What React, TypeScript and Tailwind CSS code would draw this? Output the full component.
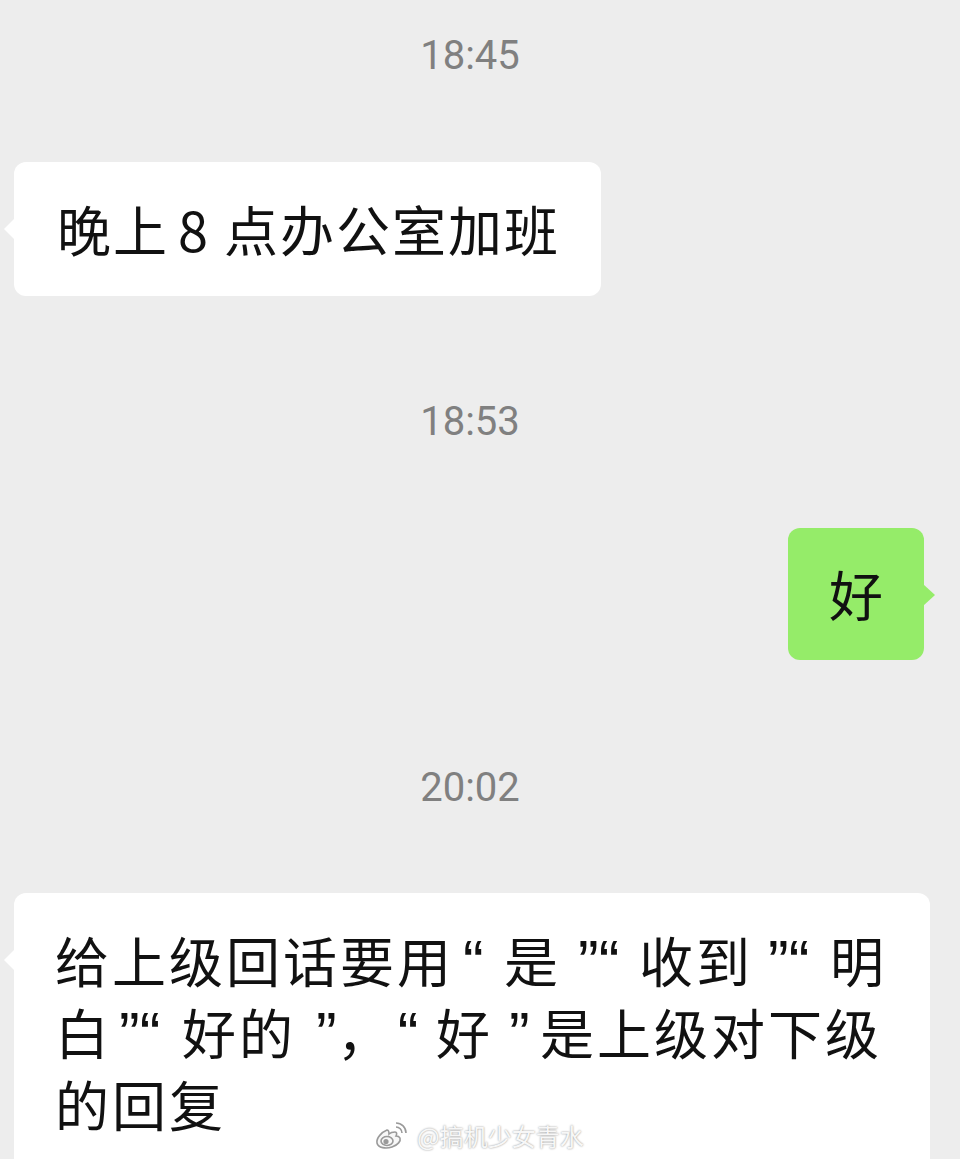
import React from "react";

const font = { fontFamily: '"Noto Sans CJK SC", "Noto Sans", sans-serif' };

function Time({ t }: { t: string }) {
  return (
    <div className="h-[50px] pr-[20px] flex items-center justify-center text-[40px] text-[#808080] font-['Roboto','Noto_Sans',sans-serif]">
      {t}
    </div>
  );
}

/* a quotation mark in a Latin font, drawn larger like the reference */
function M({ children }: { children: React.ReactNode }) {
  return (
    <span className="text-[62px] leading-[0] tracking-[0px] font-['Liberation_Sans',Arial,sans-serif]">
      {children}
    </span>
  );
}

export default function App() {
  return (
    <div
      className="w-[960px] h-[1159px] overflow-hidden bg-[#ededed] flex flex-col relative"
      style={font}
    >
      <div className="mt-[31px]">
        <Time t="18:45" />
      </div>

      {/* bubble 1 */}
      <div className="mt-[81px] ml-[14px] self-start relative">
        <div className="absolute left-[-10px] top-[56px] w-0 h-0 border-y-[11px] border-y-transparent border-r-[11px] border-r-white" />
        <div className="bg-white rounded-[12px] pl-[43px] pr-[41px] py-[31px] text-[54px] leading-[72px] tracking-[2px] text-[#111] whitespace-nowrap">
          晚上<span className="ml-[9px]">8</span>
          <span className="ml-[14px]">点办公室加班</span>
        </div>
      </div>

      <div className="mt-[101px]">
        <Time t="18:53" />
      </div>

      {/* green bubble */}
      <div className="mt-[81px] mr-[36px] self-end relative">
        <div className="absolute right-[-11px] top-[56px] w-0 h-0 border-y-[11px] border-y-transparent border-l-[12px] border-l-[#95ec69]" />
        <div className="bg-[#95ec69] rounded-[12px] px-[41px] py-[30px] text-[54px] leading-[72px] text-[#111]">
          好
        </div>
      </div>

      <div className="mt-[103px]">
        <Time t="20:02" />
      </div>

      {/* bubble 3 */}
      <div className="mt-[80px] ml-[14px] w-[916px] relative">
        <div className="absolute left-[-10px] top-[56px] w-0 h-0 border-y-[11px] border-y-transparent border-r-[11px] border-r-white" />
        <div className="bg-white rounded-[12px] pl-[41px] pr-[20px] pt-[31px] pb-[40px] text-[54px] leading-[72px] tracking-[3px] text-[#111] whitespace-nowrap">
          <div>
            给上级回话要用
            <span className="inline-block w-[50px] pl-[9px]"><M>“</M></span>
            是
            <span className="inline-block w-[78px] pl-[17px]"><M>”“</M></span>
            收到
            <span className="inline-block w-[77px] pl-[15px]"><M>”“</M></span>
            明
          </div>
          <div>
            白
            <span className="inline-block w-[70px] pl-[7px]"><M>”“</M></span>
            好的
            <span className="inline-block w-[140px] pl-[20px]">
              <M>”</M>
              <span className="tracking-[0px]">，</span>
              <span className="ml-[7px]"><M>“</M></span>
            </span>
            好
            <span className="inline-block w-[47px] pl-[16px]"><M>”</M></span>
            是上级对下级
          </div>
          <div>的回复</div>
        </div>
      </div>

      {/* watermark */}
      <div className="absolute left-[373px] top-[1118px] flex items-center gap-[8px] text-[24px] text-[#f7f7f7] [text-shadow:0_0_2px_#8a8a8a]">
        <svg width="36" height="28" viewBox="0 0 36 28" fill="#f7f7f7" stroke="#9a9a9a" strokeWidth="1.6">
          <path d="M14 8c-5 2-11 8-10 13 1 5 9 6 15 4 6-2 9-6 8-9-1-2-3-2-4-2 1-2 1-4-1-4-2 0-5 1-6 2 0-2 0-4-2-4z" />
          <ellipse cx="14" cy="19" rx="6" ry="4.5" />
          <circle cx="13" cy="19.5" r="1.8" fill="#9a9a9a" />
          <path d="M23 5a6 6 0 0 1 6 6" fill="none" />
          <path d="M23 1a10 10 0 0 1 10 10" fill="none" />
        </svg>
        <span>@搞机少女青水</span>
      </div>
    </div>
  );
}
